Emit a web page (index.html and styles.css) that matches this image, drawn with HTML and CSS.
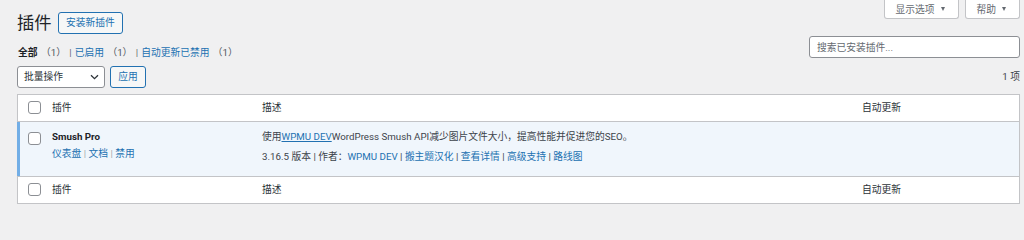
FILE: index.html
```html
<!DOCTYPE html>
<html lang="zh-CN">
<head>
<meta charset="utf-8">
<title>插件</title>
<link rel="stylesheet" href="styles.css">
</head>
<body>
<div class="wrap">
  <div class="head">
    <div class="title-group">
      <h1 class="title">插件</h1>
      <a class="btn-outline add-new" href="#">安装新插件</a>
    </div>
    <div class="screen-links">
      <span class="screen-btn">显示选项<span class="tri"></span></span>
      <span class="screen-btn">帮助<span class="tri"></span></span>
    </div>
  </div>

  <div class="filter-row">
    <ul class="subsubsub">
      <li><a class="current" href="#">全部</a> <span class="count">（1）</span> |</li>
      <li><a href="#">已启用</a> <span class="count">（1）</span> |</li>
      <li><a href="#">自动更新已禁用</a> <span class="count">（1）</span></li>
    </ul>
    <input class="search" type="search" placeholder="搜索已安装插件...">
  </div>

  <div class="tablenav">
    <div class="bulk">
      <div class="select">
        <span>批量操作</span>
        <svg class="chev" width="9" height="6" viewBox="0 0 9 6"><path d="M1 1.2 L4.5 4.6 L8 1.2" fill="none" stroke="#2c3338" stroke-width="1.3"/></svg>
      </div>
      <span class="btn-outline apply">应用</span>
    </div>
    <div class="items">1 项</div>
  </div>

  <div class="table">
    <div class="row thead">
      <div class="cell check"><span class="cb"></span></div>
      <div class="cell">插件</div>
      <div class="cell">描述</div>
      <div class="cell">自动更新</div>
    </div>
    <div class="row active">
      <div class="cell check"><span class="cb"></span></div>
      <div class="cell plugin">
        <div class="ptitle">Smush Pro</div>
        <div class="row-actions"><a href="#">仪表盘</a> <span class="sep">|</span> <a href="#">文档</a> <span class="sep">|</span> <a href="#">禁用</a></div>
      </div>
      <div class="cell desc">
        <p class="line">使用<a class="u" href="#">WPMU DEV</a>WordPress Smush API减少图片文件大小，提高性能并促进您的SEO。</p>
        <p class="line meta">3.16.5 版本 | 作者：<a href="#">WPMU DEV</a> | <a href="#">搬主题汉化</a> | <a href="#">查看详情</a> | <a href="#">高级支持</a> | <a href="#">路线图</a></p>
      </div>
      <div class="cell"></div>
    </div>
    <div class="row tfoot">
      <div class="cell check"><span class="cb"></span></div>
      <div class="cell">插件</div>
      <div class="cell">描述</div>
      <div class="cell">自动更新</div>
    </div>
  </div>
</div>
</body>
</html>
```

FILE: styles.css
```css
* { box-sizing: border-box; }

html, body {
  margin: 0;
  background: #f0f0f1;
}

body {
  font-family: Roboto, "Noto Sans CJK SC", sans-serif;
  font-size: 9.75px;
  line-height: 14px;
  color: #3c434a;
  overflow: hidden;
}

a {
  color: #2271b1;
  text-decoration: none;
}

.wrap {
  padding: 0 4px 0 17px;
}

/* header */
.head {
  display: flex;
  justify-content: space-between;
  align-items: flex-start;
  height: 34px;
}

.title-group {
  display: flex;
  align-items: center;
  margin-top: 12px;
  height: 22px;
}

.title {
  margin: 0;
  font-size: 17.25px;
  line-height: 22px;
  font-weight: 400;
  color: #1d2327;
}

.btn-outline {
  display: inline-flex;
  align-items: center;
  justify-content: center;
  height: 22px;
  border: 1px solid #2271b1;
  border-radius: 3px;
  background: #f6f7f7;
  color: #2271b1;
  font-size: 9.75px;
  line-height: 20px;
  white-space: nowrap;
}

.add-new {
  margin-left: 6.5px;
  padding: 0 7px;
}

.screen-links {
  display: flex;
  gap: 6px;
}

.screen-btn {
  display: flex;
  align-items: center;
  height: 19px;
  padding: 0 13px 0 11px;
  background: #fff;
  border: 1px solid #c3c4c7;
  border-top: 0;
  border-radius: 0 0 3px 3px;
  color: #646970;
  line-height: 17px;
}

.tri {
  width: 0;
  height: 0;
  margin-left: 6px;
  border-left: 2.5px solid transparent;
  border-right: 2.5px solid transparent;
  border-top: 4px solid #646970;
}

/* filters + search */
.filter-row {
  display: flex;
  justify-content: space-between;
  align-items: flex-start;
  margin-top: 2px;
}

.subsubsub {
  display: flex;
  margin: 10px 0 0 1px;
  padding: 0;
  list-style: none;
  line-height: 14px;
  color: #646970;
  word-spacing: 1px;
}

.subsubsub li {
  margin-right: 3px;
  white-space: pre;
}

.subsubsub .current {
  color: #1d2327;
  font-weight: 700;
}

.subsubsub .count {
  color: #50575e;
}

.search {
  width: 211px;
  height: 22px;
  margin: 0;
  padding: 0 7px;
  border: 1px solid #8c8f94;
  border-radius: 3px;
  background: #fff;
  font-family: Roboto, "Noto Sans CJK SC", sans-serif;
  font-size: 9.75px;
  color: #2c3338;
  outline: none;
}

.search::placeholder {
  color: #646970;
}

/* tablenav */
.tablenav {
  display: flex;
  justify-content: space-between;
  align-items: center;
  margin-top: 6px;
  height: 22px;
}

.bulk {
  display: flex;
  align-items: center;
}

.select {
  display: flex;
  align-items: center;
  justify-content: space-between;
  width: 88px;
  height: 22px;
  padding: 0 5px 0 6px;
  border: 1px solid #8c8f94;
  border-radius: 3px;
  background: #fff;
  color: #2c3338;
}

.apply {
  margin-left: 5px;
  width: 36px;
}

.items {
  color: #3c434a;
}

/* table */
.table {
  margin-top: 6px;
  background: #fff;
  border: 1px solid #c3c4c7;
  box-shadow: 0 1px 1px rgba(0, 0, 0, 0.04);
}

.row {
  display: grid;
  grid-template-columns: 27px 210px 600px 1fr;
}

.cell {
  padding: 5px 7px;
  line-height: 16px;
}

.thead {
  border-bottom: 1px solid #c3c4c7;
}

.thead .cell, .tfoot .cell {
  color: #2c3338;
}

.check {
  padding: 6px 0 0 10px;
}

.cb {
  display: block;
  width: 13px;
  height: 13px;
  border: 1px solid #8c8f94;
  border-radius: 3px;
  background: #fff;
}

.active {
  margin-left: -1px;
  grid-template-columns: 28px 210px 600px 1fr;
  background: #f0f6fc;
  border-bottom: 1px solid #c3c4c7;
}

.active .check {
  border-left: 3px solid #72aee6;
  padding: 10px 0 0 8px;
}

.plugin {
  padding: 7px 7px;
}

.ptitle {
  font-weight: 700;
  color: #1d2327;
  line-height: 16px;
}

.row-actions {
  margin-top: 2px;
  line-height: 14px;
}

.sep {
  color: #a7aaad;
}

.desc {
  padding: 7px 7px 11px;
}

.line {
  margin: 0;
  line-height: 16px;
  white-space: nowrap;
}

.meta {
  margin-top: 4px;
}

.u {
  text-decoration: underline;
}
```
